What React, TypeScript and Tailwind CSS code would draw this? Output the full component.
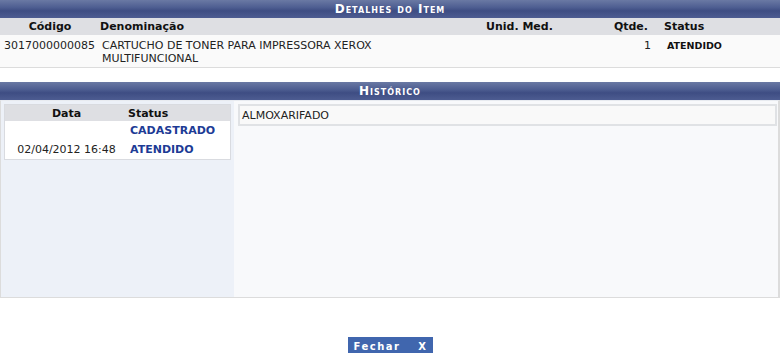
const font = "font-['DejaVu_Sans','Liberation_Sans',sans-serif]";

function Bar({ title }: { title: string }) {
  return (
    <div className="flex h-[18px] items-center justify-center bg-[linear-gradient(180deg,#6a79a4_0%,#4f5f92_40%,#3e4d83_60%,#4d5c91_100%)]">
      <span className="text-[12px] font-bold tracking-[1px] text-white [font-variant:small-caps]">{title}</span>
    </div>
  );
}

const history = [
  { data: "", status: "CADASTRADO" },
  { data: "02/04/2012 16:48", status: "ATENDIDO" },
];

export default function App() {
  return (
    <div className={`${font} w-[780px] h-[353px] overflow-hidden bg-white text-[11px] leading-[13px] text-[#222]`}>
      <section>
        <Bar title="Detalhes do Item" />
        <div className="grid h-[17px] grid-cols-[100px_384px_116px_52px_1fr] items-center bg-[#dedfe3] font-bold text-[#111]">
          <span className="text-center">Código</span>
          <span>Denominação</span>
          <span className="pl-[2px]">Unid. Med.</span>
          <span className="pr-[4px] text-right">Qtde.</span>
          <span className="pl-[12px]">Status</span>
        </div>
        <div className="grid h-[33px] grid-cols-[100px_384px_116px_52px_1fr] border-b border-[#dcdcdc] bg-[#fafafa] pt-[4px]">
          <span className="pl-[4px]">3017000000085</span>
          <span className="pl-[2px]">
            CARTUCHO DE TONER PARA IMPRESSORA XEROX
            <br />
            MULTIFUNCIONAL
          </span>
          <span />
          <span className="pr-[1px] text-right">1</span>
          <span className="pl-[15px] text-[9.5px] font-bold text-[#111]">ATENDIDO</span>
        </div>
      </section>

      <section className="mt-[14px]">
        <Bar title="Histórico" />
        <div className="flex h-[198px] border border-t-[#e8ebf0] border-[#dcdcdc] border-r-[2px]">
          <div className="w-[233px] bg-[#edf1f8] px-[3px] pt-[3px]">
            <div className="border border-[#d9dbe0] bg-white">
              <div className="grid h-[16px] grid-cols-[123px_1fr] items-center bg-[#dedfe3] font-bold text-[#111]">
                <span className="text-center">Data</span>
                <span>Status</span>
              </div>
              {history.map((h) => (
                <div key={h.status} className="grid h-[19px] grid-cols-[123px_1fr] items-center">
                  <span className="text-center">{h.data}</span>
                  <span className="pl-[2px] font-bold text-[#1d3b95]">{h.status}</span>
                </div>
              ))}
            </div>
          </div>
          <div className="flex-1 bg-[#f8f9fb] pl-[4px] pr-[1px] pt-[3px]">
            <div className="flex h-[22px] items-center border-2 border-[#e0e2e5] bg-[#f9f9f9] pl-[2px]">ALMOXARIFADO</div>
          </div>
        </div>
      </section>

      <div className="mt-[39px] flex justify-center">
        <button className="flex h-[18px] w-[85px] items-center justify-between bg-[#4066ae] pl-[6px] pr-[5px] text-[10px] font-bold tracking-[1.5px] text-white">
          <span>Fechar</span>
          <span>X</span>
        </button>
      </div>
    </div>
  );
}
